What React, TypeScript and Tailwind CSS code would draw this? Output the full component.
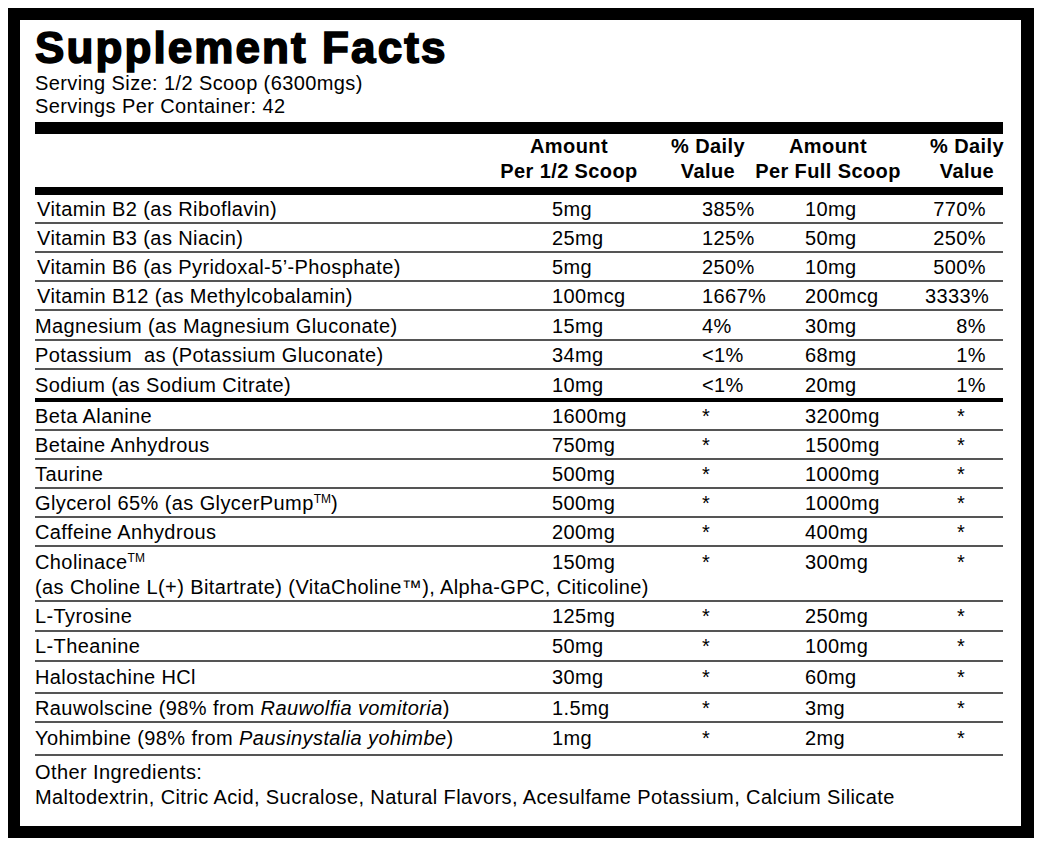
import React from 'react';

type Row = {
  name: React.ReactNode;
  a: string;
  b: string;
  c: string;
  d: string;
  cls?: string;
};

const tm = <sup className="text-[12px] tracking-normal top-[-7px]">TM</sup>;

const vitamins: Row[] = [
  { name: <span className="pl-[2px]">Vitamin B2 (as Riboflavin)</span>, a: '5mg', b: '385%', c: '10mg', d: '770%' },
  { name: <span className="pl-[2px]">Vitamin B3 (as Niacin)</span>, a: '25mg', b: '125%', c: '50mg', d: '250%' },
  { name: <span className="pl-[2px]">Vitamin B6 (as Pyridoxal-5’-Phosphate)</span>, a: '5mg', b: '250%', c: '10mg', d: '500%' },
  { name: <span className="pl-[2px]">Vitamin B12 (as Methylcobalamin)</span>, a: '100mcg', b: '1667%', c: '200mcg', d: '3333%' },
  { name: 'Magnesium (as Magnesium Gluconate)', a: '15mg', b: '4%', c: '30mg', d: '8%', cls: 'pt-[3px]' },
  { name: 'Potassium\u00a0 as (Potassium Gluconate)', a: '34mg', b: '<1%', c: '68mg', d: '1%' },
  { name: 'Sodium (as Sodium Citrate)', a: '10mg', b: '<1%', c: '20mg', d: '1%', cls: 'pt-[3px] border-b-4 border-black' },
];

const ingredients: Row[] = [
  { name: 'Beta Alanine', a: '1600mg', b: '*', c: '3200mg', d: '*' },
  { name: 'Betaine Anhydrous', a: '750mg', b: '*', c: '1500mg', d: '*' },
  { name: 'Taurine', a: '500mg', b: '*', c: '1000mg', d: '*' },
  { name: <>Glycerol 65% (as GlycerPump{tm})</>, a: '500mg', b: '*', c: '1000mg', d: '*' },
  { name: 'Caffeine Anhydrous', a: '200mg', b: '*', c: '400mg', d: '*' },
  {
    name: (
      <span className="whitespace-nowrap">
        Cholinace{tm}
        <br />
        (as Choline L(+) Bitartrate) (VitaCholine™), Alpha-GPC, Citicoline)
      </span>
    ),
    a: '150mg',
    b: '*',
    c: '300mg',
    d: '*',
    cls: 'pt-[3px]',
  },
  { name: 'L-Tyrosine', a: '125mg', b: '*', c: '250mg', d: '*', cls: 'pt-[2px] pb-[1px]' },
  { name: 'L-Theanine', a: '50mg', b: '*', c: '100mg', d: '*', cls: 'pt-[2px] pb-[1px]' },
  { name: 'Halostachine HCl', a: '30mg', b: '*', c: '60mg', d: '*', cls: 'pt-[3px] pb-[2px]' },
  { name: <>Rauwolscine (98% from <i>Rauwolfia vomitoria</i>)</>, a: '1.5mg', b: '*', c: '3mg', d: '*' },
  { name: <>Yohimbine (98% from <i>Pausinystalia yohimbe</i>)</>, a: '1mg', b: '*', c: '2mg', d: '*', cls: 'pt-[3px] pb-[3px]' },
];

function FactRow({ row }: { row: Row }) {
  return (
    <div
      className={`grid grid-cols-[517px_150px_103px_120px_1fr] leading-[25px] ${
        row.cls && row.cls.includes('border-b-4') ? '' : 'border-b-2 border-[#555]'
      } ${row.cls ?? 'pt-[2px]'}`}
    >
      <div className="whitespace-nowrap">{row.name}</div>
      <div>{row.a}</div>
      <div>{row.b}</div>
      <div>{row.c}</div>
      <div className={row.d === '*' ? 'pl-[32px]' : 'text-right pr-[17px]'}>{row.d}</div>
    </div>
  );
}

export default function App() {
  return (
    <div className="bg-white w-[1042px] h-[847px] pt-[8px] pl-[8px]">
      <div className="w-[1026px] h-[830px] border-[12px] border-r-[13px] border-black bg-white pl-[15px] pr-[18px] pt-[6px] font-['Liberation_Sans',Arial,sans-serif] text-black tracking-[0.4px] text-[20px]">
        {/* Title and serving info */}
        <h1 className="text-[44px] leading-[44px] font-bold tracking-[2.1px] [-webkit-text-stroke:1.6px_#000]">
          Supplement Facts
        </h1>
        <div className="mt-[2px] leading-[23px]">
          <p>Serving Size: 1/2 Scoop (6300mgs)</p>
          <p>Servings Per Container: 42</p>
        </div>
        <div className="mt-[4px] h-[12px] bg-black" />

        {/* Column headers */}
        <div className="flex font-bold leading-[25px] pb-[3px] text-center whitespace-nowrap">
          <div className="w-[459px] shrink-0" />
          <div className="w-[150px] shrink-0">
            Amount
            <br />
            Per 1/2 Scoop
          </div>
          <div className="w-[90px] ml-[19px] shrink-0">
            % Daily
            <br />
            Value
          </div>
          <div className="w-[150px] shrink-0">
            Amount
            <br />
            Per Full Scoop
          </div>
          <div className="w-[80px] ml-[24px] shrink-0">
            % Daily
            <br />
            Value
          </div>
        </div>
        <div className="h-[8px] bg-black" />

        {/* Vitamins and minerals */}
        {vitamins.map((r, i) => (
          <FactRow key={i} row={r} />
        ))}

        {/* Other actives */}
        {ingredients.map((r, i) => (
          <FactRow key={i} row={r} />
        ))}

        <div className="pt-[4px] leading-[25px]">
          <p>Other Ingredients:</p>
          <p>Maltodextrin, Citric Acid, Sucralose, Natural Flavors, Acesulfame Potassium, Calcium Silicate</p>
        </div>
      </div>
    </div>
  );
}
